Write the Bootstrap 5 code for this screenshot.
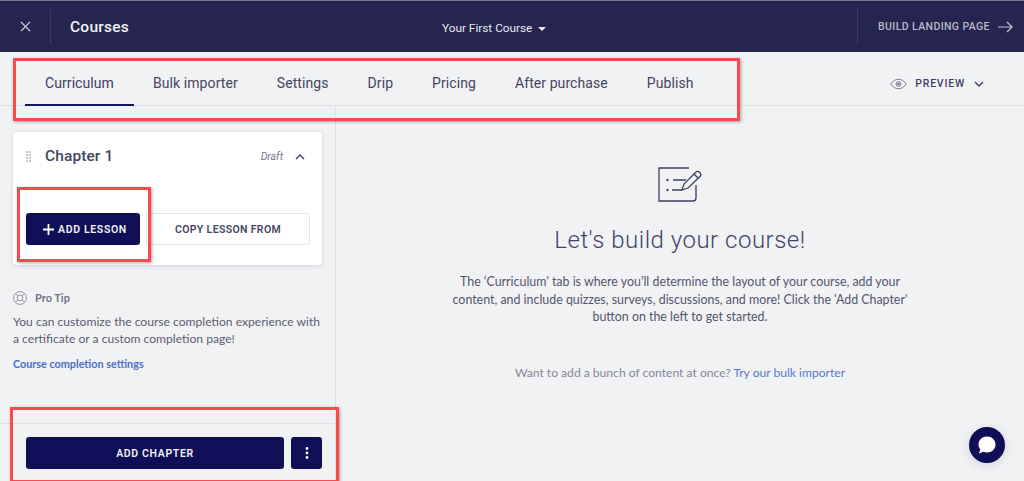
<!DOCTYPE html>
<html lang="en">
<head>
    <meta charset="UTF-8">
    <meta name="viewport" content="width=device-width, initial-scale=1.0">
    <title>Courses</title>
    <link href="https://cdn.jsdelivr.net/npm/bootstrap@5.3.0/dist/css/bootstrap.min.css" rel="stylesheet">
    <style>
        html, body { height: 100%; overflow: hidden; }
        body {
            background: #f1f2f4;
            color: #3e3e5e;
            font-family: Lato, "Liberation Sans", sans-serif;
            font-size: 12.1px;
        }
        .page-wrap { position: relative; width: 1024px; height: 481px; overflow: hidden; }

        .top-bar {
            height: 52px;
            background: #25254f;
            border-top: 1px solid #77778f;
            font-family: Roboto, sans-serif;
        }
        .close-cell { width: 51px; height: 36px; border-right: 1px solid #3d3d63; }
        .top-title { color: #f1f2f5; font-size: 15.5px; font-weight: 500; margin-left: 19px; letter-spacing: .25px; padding-top: 2px; }
        .course-pick { color: #e8e8ee; font-size: 11.8px; left: 442px; top: 19px; gap: 6px; }
        .caret-down { border-left: 4px solid transparent; border-right: 4px solid transparent; border-top: 4px solid #e8e8ee; }
        .landing-cell {
            height: 36px; width: 167px; border-left: 1px solid #3d3d63;
            color: #b9b9c9; font-size: 10.5px; font-weight: 500; letter-spacing: .4px;
        }

        .tab-bar { height: 54px; border-bottom: 1px solid #dfe0e5; font-family: Roboto, sans-serif; padding-left: 25px; }
        .tab-item { color: #45455f; font-size: 14px; letter-spacing: .08px; padding: 0 20px; height: 54px; line-height: 63px; margin-right: -1px; text-decoration: none; }
        .tab-on { color: #3c3c66; border-bottom: 2px solid #15155a; }
        .preview-link { color: #3f3f63; font-size: 10.5px; font-weight: 500; letter-spacing: .8px; margin-right: 40px; margin-top: 11px; }

        .side-pane { width: 336px; height: 375px; border-right: 1px solid #dfe0e5; }
        .chapter-box { left: 13px; top: 26px; width: 309px; height: 133px; background: #fff; border-radius: 4px; box-shadow: 0 1px 4px rgba(40,40,80,.15); }
        .chapter-head { height: 47px; padding: 2px 17px 0 13px; }
        .chapter-title { font-family: Roboto, sans-serif; font-size: 15.5px; font-weight: 500; color: #44445f; letter-spacing: .1px; margin-left: 13px; }
        .draft-label { font-family: Roboto, sans-serif; font-style: italic; font-size: 10.5px; color: #77778a; }
        .navy-btn {
            background: #100e57; color: #f1f2f5; border: 0; border-radius: 3px;
            font-family: Roboto, sans-serif; font-size: 10.5px; font-weight: 600; letter-spacing: .65px; height: 32px;
        }
        .navy-btn:hover { background: #100e57; color: #f1f2f5; }
        .ghost-btn {
            background: #fff; color: #45456a; border: 1px solid #e6e6ec; border-radius: 0 3px 3px 0;
            font-family: Roboto, sans-serif; font-size: 10.5px; font-weight: 600; letter-spacing: .35px; height: 32px;
        }
        .btn-label { padding-top: 2px; }
        .tip-area { left: 13px; top: 184px; width: 312px; }
        .tip-head { font-size: 11px; font-weight: 700; color: #74748a; }
        .tip-text { line-height: 17.5px; color: #5c5c72; margin-top: 6px; }
        .tip-link { font-size: 10.8px; font-weight: 700; color: #4a6fc9; text-decoration: none; display: block; margin-top: 8px; }
        .side-foot { left: 0; top: 317px; width: 335px; border-top: 1px solid #dfe0e5; padding: 13px 13px 0 26px; gap: 7px; }

        .main-pane { width: 688px; text-align: center; padding-top: 61px; }
        .main-title { font-family: Roboto, sans-serif; font-weight: 300; font-size: 24px; color: #44446a; margin: 21px 0 0; letter-spacing: .5px; line-height: 32px; }
        .main-text { font-size: 12.4px; line-height: 17.5px; color: #55556e; width: 480px; margin: 17px auto 0; }
        .main-more { color: #85859a; margin-top: 38px; }
        .main-more a { color: #5878cf; text-decoration: none; }

        .chat-bubble { right: 19px; top: 427px; width: 36px; height: 36px; border-radius: 50%; background: #100e57; box-shadow: 0 2px 10px rgba(30,30,80,.15); }

        .mark-box { border: 3px solid #fa4a4f; box-shadow: 1px 1px 3px rgba(60,60,60,.45); pointer-events: none; }
        .mark-tabs { left: 13px; top: 58px; width: 727px; height: 63px; }
        .mark-lesson { left: 17px; top: 187px; width: 134px; height: 75px; }
        .mark-chapter { left: 10px; top: 407px; width: 329px; height: 76px; }
    </style>
</head>
<body>
<div class="page-wrap">
    <!-- Top bar -->
    <div class="top-bar d-flex align-items-center position-relative">
        <div class="close-cell d-flex align-items-center justify-content-center">
            <svg width="11" height="11" viewBox="0 0 12 12" fill="none" stroke="#d6d6e0" stroke-width="1.4"><path d="M1 1l10 10M11 1L1 11"/></svg>
        </div>
        <span class="top-title">Courses</span>
        <div class="course-pick position-absolute d-flex align-items-center">Your First Course <span class="caret-down"></span></div>
        <div class="landing-cell ms-auto d-flex align-items-center ps-3 gap-2">
            <span class="ps-1 text-nowrap">BUILD LANDING PAGE</span>
            <svg class="flex-shrink-0" width="15" height="12" viewBox="0 0 15 12" fill="none" stroke="#c4c4d2" stroke-width="1.2"><path d="M0 6h14M9 1l5 5-5 5"/></svg>
        </div>
    </div>

    <!-- Tabs -->
    <div class="tab-bar d-flex align-items-start">
        <a class="tab-item tab-on" href="#">Curriculum</a>
        <a class="tab-item" href="#">Bulk importer</a>
        <a class="tab-item" href="#">Settings</a>
        <a class="tab-item" href="#">Drip</a>
        <a class="tab-item" href="#">Pricing</a>
        <a class="tab-item" href="#">After purchase</a>
        <a class="tab-item" href="#">Publish</a>
        <div class="preview-link ms-auto d-flex align-items-center align-self-center gap-2">
            <svg width="17" height="12" viewBox="0 0 18 12" fill="none" stroke="#77778a" stroke-width="1"><path d="M.8 6C3 2.600 6 1 9 1s6 1.600 8.200 5C15 9.400 12 11 9 11S3 9.400.8 6z"/><circle cx="9" cy="6" r="2.600"/><circle cx="9" cy="6" r="1" fill="#77778a"/></svg>
            <span>PREVIEW</span>
            <svg style="margin-left:1px" width="10" height="6" viewBox="0 0 10 6" fill="none" stroke="#3f3f63" stroke-width="1.4"><path d="M1 1l4 4 4-4"/></svg>
        </div>
    </div>

    <div class="d-flex">
        <!-- Sidebar -->
        <div class="side-pane position-relative">
            <div class="chapter-box position-absolute">
                <div class="chapter-head d-flex align-items-center">
                    <svg width="6" height="12" viewBox="0 0 6 12" fill="#77778a"><circle cx="1" cy="1" r=".75"/><circle cx="4" cy="1" r=".75"/><circle cx="1" cy="4" r=".75"/><circle cx="4" cy="4" r=".75"/><circle cx="1" cy="7" r=".75"/><circle cx="4" cy="7" r=".75"/><circle cx="1" cy="10" r=".75"/><circle cx="4" cy="10" r=".75"/></svg>
                    <span class="chapter-title">Chapter 1</span>
                    <span class="draft-label ms-auto">Draft</span>
                    <svg style="margin-left:12px" width="10" height="6" viewBox="0 0 10 6" fill="none" stroke="#3f3f63" stroke-width="1.4"><path d="M1 5l4-4 4 4"/></svg>
                </div>
                <div class="d-flex" style="padding: 34px 12px 0 13px">
                    <button class="btn navy-btn d-flex align-items-center justify-content-center gap-1" style="width:114px;padding:0 0 0 4px">
                        <svg width="11" height="11" viewBox="0 0 11 11" stroke="#fff" stroke-width="1.8"><path d="M5.500 0v11M0 5.500h11"/></svg>
                        <span class="btn-label">ADD LESSON</span>
                    </button>
                    <button class="btn ghost-btn p-0" style="width:164px;margin-left:6px"><span class="btn-label d-block">COPY LESSON FROM</span></button>
                </div>
            </div>

            <div class="tip-area position-absolute">
                <div class="tip-head d-flex align-items-center gap-2">
                    <svg width="14" height="14" viewBox="0 0 14 14" fill="none" stroke="#8a8a9a" stroke-width=".9"><circle cx="7" cy="7" r="6.400"/><circle cx="7" cy="7" r="2.800"/><path d="M2.500 2.500l2.500 2.500M11.500 2.500L9 5M2.500 11.500L5 9M11.500 11.500L9 9"/></svg>
                    Pro Tip
                </div>
                <div class="tip-text">You can customize the course completion experience with a certificate or a custom completion page!</div>
                <a class="tip-link" href="#">Course completion settings</a>
            </div>

            <div class="side-foot position-absolute d-flex">
                <button class="btn navy-btn p-0" style="width:258px"><span class="btn-label d-block">ADD CHAPTER</span></button>
                <button class="btn navy-btn p-0 d-flex align-items-center justify-content-center" style="width:31px">
                    <svg width="4" height="12" viewBox="0 0 4 12" fill="#fff"><circle cx="2" cy="1.500" r="1.400"/><circle cx="2" cy="6" r="1.400"/><circle cx="2" cy="10.500" r="1.400"/></svg>
                </button>
            </div>
        </div>

        <!-- Main pane -->
        <div class="main-pane">
            <svg class="d-block mx-auto" width="44" height="36" viewBox="0 0 44 36" fill="none" stroke="#3f3f63" stroke-width="1.300">
                <path d="M31 1H1v33h34a3 3 0 0 0 3-3V18"/>
                <circle cx="9.500" cy="13" r="1.200" fill="#3f3f63" stroke="none"/>
                <circle cx="9.500" cy="23" r="1.200" fill="#3f3f63" stroke="none"/>
                <path d="M15 13h13M14 23h10"/>
                <path d="M24 23l2-6L38 5a2.200 2.200 0 0 1 3.200 0l1 1a2.200 2.200 0 0 1 0 3.200L30 21z"/>
                <path d="M36 7l4 4"/>
            </svg>
            <h1 class="main-title">Let's build your course!</h1>
            <p class="main-text">The ‘Curriculum’ tab is where you'll determine the layout of your course, add your content, and include quizzes, surveys, discussions, and more! Click the 'Add Chapter' button on the left to get started.</p>
            <div class="main-more">Want to add a bunch of content at once? <a href="#">Try our bulk importer</a></div>
        </div>
    </div>

    <!-- Chat launcher -->
    <div class="chat-bubble position-absolute d-flex align-items-center justify-content-center">
        <svg width="20" height="20" viewBox="0 0 20 20" fill="#fff"><path d="M10 1.500c4.800 0 8.500 3.400 8.500 8s-3.700 8-8.500 8c-1.300 0-2.500-.2-3.600-.7L2 18.500l1.300-4.200C2 12.900 1.500 11.300 1.500 9.500c0-4.600 3.700-8 8.500-8z"/></svg>
    </div>

    <!-- Annotation boxes -->
    <div class="mark-box mark-tabs position-absolute"></div>
    <div class="mark-box mark-lesson position-absolute"></div>
    <div class="mark-box mark-chapter position-absolute"></div>
</div>
<script src="https://cdn.jsdelivr.net/npm/bootstrap@5.3.0/dist/js/bootstrap.bundle.min.js"></script>
</body>
</html>
